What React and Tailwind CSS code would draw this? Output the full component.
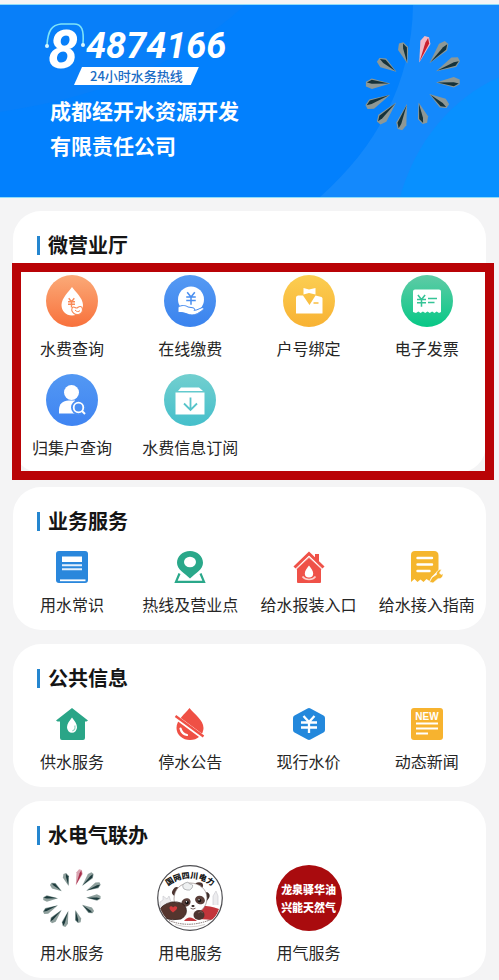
import React from 'react';

// length and direction of every blade of the water company logo
const BLADES = [
  { angle: 17, outer: 147, inner: 69, red: true },
  { angle: 40, outer: 160, inner: 82 },
  { angle: 63, outer: 157, inner: 83 },
  { angle: 89, outer: 142, inner: 74 },
  { angle: 124, outer: 127, inner: 64 },
  { angle: 164, outer: 128, inner: 66 },
  { angle: 196, outer: 147, inner: 70 },
  { angle: 221, outer: 160, inner: 82 },
  { angle: 243, outer: 159, inner: 82 },
  { angle: 269, outer: 143, inner: 73 },
  { angle: 304, outer: 127, inner: 65 },
  { angle: 344, outer: 127, inner: 66 },
];

const BladeLogo = ({ className, light = '#8d9896', dark = '#15323a', redLight = '#f3b9c6', redDark = '#c9202e' }) => (
  <svg viewBox="-164 -164 328 328" className={className} aria-hidden="true">
    {BLADES.map(({ angle, outer, inner, red }) => {
      const wide = outer - 18;
      return (
        <g key={angle} transform={`rotate(${angle})`}>
          <polygon points={`0,${-inner + 4} -16,${-wide} -8,${-outer} 6,${-outer} 16,${-wide}`} fill={red ? redLight : light} />
          <polygon points={`0,${-inner} 0,${-wide} 4,${-outer + 3} 12,${-wide}`} fill={red ? redDark : dark} />
        </g>
      );
    })}
  </svg>
);

const Circle = ({ id, from, to, children }) => (
  <svg viewBox="0 0 52 52" className="size-[52px]" aria-hidden="true">
    <defs>
      <linearGradient id={id} x1="0" y1="0" x2="0" y2="1">
        <stop offset="0" stopColor={from} />
        <stop offset="1" stopColor={to} />
      </linearGradient>
    </defs>
    <circle cx="26" cy="26" r="26" fill={`url(#${id})`} />
    {children}
  </svg>
);

const Yen = ({ x, y, size = 1, color, width = 1.6 }) => (
  <path
    transform={`translate(${x} ${y}) scale(${size})`}
    d="M-4-6 0-1 4-6M0-1V7M-5-1H5M-5 2.6H5"
    fill="none"
    stroke={color}
    strokeWidth={width}
  />
);

const BillIcon = () => (
  <Circle id="bill" from="#fbaa78" to="#f8713c">
    <path d="M26 12c3 4.500 11 11 11 18 0 6-5 10.500-11 10.500S15.500 36 15.500 30C15.500 23 23 16.500 26 12Z" fill="#fff" />
    <Yen x={25.500} y={27.500} size={0.700} color="#f98a58" width={2} />
    <path d="M26.500 32.500c1.500-1.500 2.500.5 4 .5s2-2 4-1.500 2.500 3 1.500 5.500-5.500 3.500-8 1.500-2.500-4.500-1.500-6Z" fill="#fff" stroke="#f98a58" strokeWidth="1.100" />
    <path d="M29 35c1.500 2 4 2 5 .5" fill="none" stroke="#f98a58" strokeWidth="1" />
  </Circle>
);

const PayIcon = () => (
  <Circle id="pay" from="#569af3" to="#3a83ee">
    <circle cx="27" cy="24.500" r="13" fill="#fff" />
    <Yen x={27} y={23} size={0.950} color="#4a8ff0" width={1.600} />
    <path d="M14 32c4-2 7-2 10 0l5 .8c2 .4 2 2 1 2.500 3 .2 5-1.800 8-2.600 2-.4 2.500 1.200 1 2.200-4 2.900-7 5.100-11 5.100-4 0-6-2-10-2.400l-4-.2Z" fill="#fff" stroke="#4389ef" strokeWidth="1" />
  </Circle>
);

const BindIcon = () => (
  <Circle id="bind" from="#fbce52" to="#f8b233">
    <path d="M20.500 13 26 14.500 32.500 13v6.500L26 18l-5.500 1.500Z" fill="#fff" />
    <path d="M15 20.500h5l6.500 9.500 6-9.500 6 1.500q1 .5 1 1.500V38.500H13V22.500q0-1.500 2-2Z" fill="#fff" />
    <path d="M30.500 28h5" stroke="#f9be42" strokeWidth="1.500" />
  </Circle>
);

const InvoiceIcon = () => (
  <Circle id="invoice" from="#5fcba6" to="#07c886">
    <path d="M14 14.500h24q2 0 2 2V37l-2 1-2.300-1.500L33.400 38l-2.300-1.500L28.800 38l-2.300-1.500L24.200 38l-2.300-1.500L19.600 38l-2.300-1.500L15 38l-3-1V16.500q0-2 2-2Z" fill="#fff" />
    <Yen x={20.500} y={25.500} size={0.900} color="#35c496" width={1.700} />
    <path d="M27 23.500h9M27 27.500h6.500" stroke="#35c496" strokeWidth="1.500" />
  </Circle>
);

const AccountIcon = () => (
  <Circle id="account" from="#5398f3" to="#3f84f2">
    <circle cx="25.500" cy="18.500" r="7.500" fill="#fff" />
    <path d="M13 39.500V36c0-6 4-9.500 9.500-9.500h6.500L33 39.500Z" fill="#fff" />
    <circle cx="32.500" cy="33.500" r="5.500" fill="#4a8ff3" stroke="#4a8ff3" strokeWidth="4" />
    <circle cx="32.500" cy="33.500" r="4.800" fill="#4a8ff3" stroke="#fff" strokeWidth="1.800" />
    <path d="m36 37 3 3" stroke="#fff" strokeWidth="2" />
  </Circle>
);

const SubscribeIcon = () => (
  <Circle id="subscribe" from="#72cfcf" to="#45bfcb">
    <path d="M17 13.500h18l4 3.500H14Z" fill="#fff" />
    <path d="M11.500 18.500h29V40.500h-29Z" fill="#fff" />
    <path d="M26.500 23.500v12m-6.500-6 6.500 6.500 6.500-6.500" fill="none" stroke="#57c4ca" strokeWidth="1.800" />
  </Circle>
);

const Small = ({ children }) => (
  <svg viewBox="0 0 32 32" className="size-8" aria-hidden="true">{children}</svg>
);

const BookIcon = () => (
  <Small>
    <rect width="32" height="32" rx="3" fill="#2a87dc" />
    <path d="M6 5.500h20v5.500H6Z" fill="#fff" />
    <path d="M6 14.200h20M6 18.200h20" stroke="#e4f0fb" strokeWidth="2" />
    <path d="M4 29.300h25.500" stroke="#fff" strokeWidth="1.800" />
  </Small>
);

const PinIcon = () => (
  <Small>
    <path d="M16 0c7.500 0 13 5.200 13 11.800C29 18.500 22 22 16 27.500 10 22 3 18.500 3 11.800 3 5.200 8.500 0 16 0Z" fill="#2aa88a" />
    <ellipse cx="16" cy="11" rx="6" ry="5.300" fill="#fff" />
    <path d="M5.500 22.500 2 30.800h28l-3.500-8.300" fill="none" stroke="#2aa88a" strokeWidth="2.200" />
  </Small>
);

const HouseDropIcon = () => (
  <Small>
    <path d="M22 3h4v9l-4-4Z" fill="#ef5148" />
    <path d="m1.500 16.500 14.500-14 14.500 14" fill="none" stroke="#ef5148" strokeWidth="3" />
    <path d="M4 17.500 16 6.500l12 11V31q0 1-1 1H5q-1 0-1-1Z" fill="#ef5148" />
    <path d="m3 18.500 13-12 13 12" fill="none" stroke="#f9b8b3" strokeWidth=".8" />
    <path d="M16 14.500c2 2.800 4.200 5 4.200 8a4.200 4 0 0 1-8.400 0c0-3 2.200-5.200 4.200-8Z" fill="#fff" />
    <path d="M9.500 25.500c3 4 10 4 13 0" fill="none" stroke="#fbd0cb" strokeWidth="1.600" />
  </Small>
);

const GuideIcon = () => (
  <Small>
    <path d="M4 0h19q4.500 0 4.500 4.500V19l-7 7-2 4-3-2-3 3-3-2.500L6.500 31 3.500 28 0 31V4Q0 0 4 0Z" fill="#f5b62e" />
    <path d="M6.500 7h14.500M6.500 13.500h14.500M6.500 20h12" stroke="#fff" strokeWidth="2.400" strokeLinecap="round" />
    <path d="M18.500 31 21 26.500l4.500-3c-.5-3 2.500-5.500 5-5l-2 3.500 1.500 1.500 2-.8c.2 3.300-2 5.500-5 5l-5 4.300Z" fill="#f5b62e" stroke="#fff" strokeWidth=".6" />
  </Small>
);

const SupplyIcon = () => (
  <Small>
    <path d="M16 0 32 12.500l-1.500 1H29V30q0 2-2 2H6q-2 0-2-2V13.500H1.500L0 12.500Z" fill="#2aa587" />
    <path d="M16 9.500c2.500 3.500 5 6 5 9.800a5 5.500 0 0 1-10 0c0-3.800 2.500-6.300 5-9.800Z" fill="#fff" />
    <path d="M18.800 17.500c.8 3-.3 4.800-2.500 5.500" fill="none" stroke="#8fd1c0" strokeWidth="1.200" />
  </Small>
);

const OutageIcon = () => (
  <Small>
    <path d="M15.500 0C20 6 29.500 12 29.500 20a13.500 12 0 0 1-27 0C2.500 12 11 6 15.500 0Z" fill="#ef5045" />
    <path d="m1 8.500 28.500 21" stroke="#fff" strokeWidth="4.600" />
    <path d="m1.500 8 28 20.500" stroke="#ef5045" strokeWidth="2.400" />
    <path d="M6.500 20.500c.8 3.500 3 5.800 6.500 6.500" fill="none" stroke="#fff" strokeWidth="2.200" strokeLinecap="round" />
  </Small>
);

const PriceIcon = () => (
  <Small>
    <path d="M14.500.5q1.500-.8 3 0L30.500 7.500Q32 8.300 32 10v12q0 1.700-1.500 2.500l-13 7q-1.500.8-3 0l-13-7Q0 23.700 0 22V10q0-1.700 1.500-2.500Z" fill="#2388dc" />
    <path d="m10.500 8 5.500 6 5.500-6M8 14.500h16M8 19.500h16M16 14v11" fill="none" stroke="#fff" strokeWidth="2.300" />
  </Small>
);

const NewsIcon = () => (
  <Small>
    <rect width="32" height="32" rx="3" fill="#f7b32f" />
    <text x="16" y="11.500" textAnchor="middle" fontSize="10" fontWeight="700" fill="#fff" fontFamily="Liberation Sans, sans-serif">NEW</text>
    <path d="M5 15.500h22M5 20.500h22M5 25.500h12" stroke="#fff" strokeWidth="2" />
  </Small>
);

const PandaLogo = () => (
  <svg viewBox="0 0 66 66" className="size-[66px]" aria-hidden="true">
    <defs>
      <path id="panda-arc" d="M9 22.500Q33 4 57 22.500" />
      <clipPath id="panda-clip"><circle cx="33" cy="33" r="31.500" /></clipPath>
    </defs>
    <circle cx="33" cy="33" r="32.300" fill="#fff" stroke="#4c4c50" strokeWidth="1.200" />
    <g clipPath="url(#panda-clip)">
      <path d="M3 42v-5l3-2v-4l4 3 2-3 2 6M56 40v-9l3-5 2 5v9" fill="#ececee" stroke="#c8c8cc" strokeWidth=".6" />
      <path d="M42 41q8-1 20 3-3 9-8 11-10-2-26 1l1-8Z" fill="#c2353b" />
      <ellipse cx="19" cy="26.500" rx="3.500" ry="4.500" transform="rotate(35 19 26.500)" fill="#4d3530" />
      <ellipse cx="42" cy="20.500" rx="4" ry="3.200" fill="#4d3530" />
      <path d="M46 34q-1-5 4-7 4 2 2 6l-3 4Z" fill="#3d2d2a" />
      <path d="M17 34c0-10 7-16 16-16s17 6 17 15-7 16-16 16-17-6-17-15Z" fill="#fff" stroke="#857673" strokeWidth=".6" />
      <ellipse cx="29" cy="37.500" rx="4.800" ry="4" transform="rotate(-30 29 37.500)" fill="#5a3f3a" />
      <ellipse cx="43" cy="35" rx="5" ry="4.200" transform="rotate(20 43 35)" fill="#5a3f3a" />
      <circle cx="30" cy="37.500" r="1.700" fill="#0f0c0c" />
      <circle cx="42.500" cy="35.500" r="1.700" fill="#0f0c0c" />
      <circle cx="29.500" cy="36.800" r=".7" fill="#fff" />
      <circle cx="42" cy="34.800" r=".7" fill="#fff" />
      <ellipse cx="36" cy="41" rx="1.600" ry="1.100" fill="#2a1e1c" />
      <path d="M33.500 43.200q2.500 1.800 5 0" fill="none" stroke="#5a413d" strokeWidth=".8" />
      <path d="M27 24q-3-4 1-6 3-2 5 1 4 0 2 4-2 3-5 2Z" fill="#eef0f1" stroke="#9b9ea1" strokeWidth=".7" />
      <path d="M25 46h20v9H27Z" fill="#fbf9f8" />
      <path d="M1 47q4-8 14-10 11-1 14 6 2 7-5 11-8 2-18-1Z" fill="#54352e" stroke="#332220" strokeWidth=".8" />
      <ellipse cx="42" cy="50" rx="5.500" ry="5" fill="#4d342f" />
      <path d="M41 48q3-3 5 0" fill="none" stroke="#83615b" strokeWidth=".8" />
      <path d="M16 47.500q-5-4-3-6 2-1 3 1 2-2 4-.5 1 2-4 5.500Z" fill="#d33a3c" />
      <path d="M27 56q5-7 13 0Z" fill="#c2353b" />
    </g>
    <text fontSize="8" fontWeight="900" fill="#161616" textAnchor="middle" fontFamily="Noto Sans CJK SC, sans-serif">
      <textPath href="#panda-arc" startOffset="50%">国网四川电力</textPath>
    </text>
    <path d="M12 55.500q20 8 42-1" fill="none" stroke="#70605e" strokeWidth=".9" strokeDasharray="1.500 .8" />
    <path d="M18 59.500q15 4.500 30 0" fill="none" stroke="#b9b0af" strokeWidth=".6" />
  </svg>
);

const GasLogo = () => (
  <span className="flex size-[66px] flex-col items-center justify-center rounded-full bg-[#a90b0e] text-[11px] leading-[18px] font-black whitespace-nowrap text-white">
    <span>龙泉驿华油</span>
    <span>兴能天然气</span>
  </span>
);

const HALL = [
  { label: '水费查询', icon: <BillIcon /> },
  { label: '在线缴费', icon: <PayIcon /> },
  { label: '户号绑定', icon: <BindIcon /> },
  { label: '电子发票', icon: <InvoiceIcon /> },
  { label: '归集户查询', icon: <AccountIcon /> },
  { label: '水费信息订阅', icon: <SubscribeIcon /> },
];

const BUSINESS = [
  { label: '用水常识', icon: <BookIcon /> },
  { label: '热线及营业点', icon: <PinIcon /> },
  { label: '给水报装入口', icon: <HouseDropIcon /> },
  { label: '给水接入指南', icon: <GuideIcon /> },
];

const PUBLIC_INFO = [
  { label: '供水服务', icon: <SupplyIcon /> },
  { label: '停水公告', icon: <OutageIcon /> },
  { label: '现行水价', icon: <PriceIcon /> },
  { label: '动态新闻', icon: <NewsIcon /> },
];

const PARTNERS = [
  { label: '用水服务', icon: <BladeLogo className="size-[66px]" light="#8fa09d" dark="#1c3a3c" redLight="#d9a3b0" redDark="#a92f4b" /> },
  { label: '用电服务', icon: <PandaLogo /> },
  { label: '用气服务', icon: <GasLogo /> },
];

const Section = ({ title, items, highlighted }) => (
  <section className="relative rounded-[28px] bg-white pt-6 pb-4">
    <h2 className="ml-6 flex items-center gap-2 text-[20px] leading-5 font-bold text-[#151515]">
      <span className="h-[19px] w-[3px] bg-[#2586cf]" />
      {title}
    </h2>
    <div className="mt-5 grid grid-cols-4 gap-y-4">
      {items.map((item) => (
        <a key={item.label} href="#" className="flex flex-col items-center gap-[11px] text-[16px] leading-5 whitespace-nowrap text-[#262626]">
          {item.icon}
          {item.label}
        </a>
      ))}
    </div>
    {highlighted && <div className="pointer-events-none absolute top-[52px] -right-2 -bottom-[7px] -left-px border-[9px] border-[#b90306]" />}
  </section>
);

const Banner = () => (
  <header className="relative flex items-start justify-between overflow-hidden border-y border-[#8fdcf8] bg-[#0280fd] pt-6 pr-8 pb-[34px] pl-12 text-white">
    <svg viewBox="0 0 499 194" preserveAspectRatio="none" className="absolute inset-0 size-full" aria-hidden="true">
      <path d="M0 0H245C190 50 120 90 0 108Z" fill="#087ff9" />
      <path d="M413 0C412 80 375 145 320 194H499V0Z" fill="#1489fc" />
      <path d="M499 73C450 95 415 140 400 194H499Z" fill="#0890ff" />
    </svg>
    <div className="relative">
      <svg viewBox="0 0 44 28" className="absolute -top-2 -left-1 h-7 w-11" aria-hidden="true">
        <path d="M3 24C4 9 8 4 17 3h13c8 0 10 6 9 20" fill="none" stroke="#7fe3f7" strokeWidth="1.600" />
        <circle cx="3" cy="25" r="2" fill="#d9f7fd" />
        <circle cx="39" cy="24" r="2" fill="#d9f7fd" />
      </svg>
      <p className="flex h-[38px] items-start gap-2 font-[Roboto,sans-serif] font-bold italic">
        <span className="text-[54px] leading-[42px]">8</span>
        <span className="text-[36px] leading-[34px]">4874166</span>
      </p>
      <p className="relative ml-[26px] w-fit bg-white px-4 text-[13px] leading-[18px] font-medium text-[#1a6cc4] [clip-path:polygon(8px_0,100%_0,calc(100%-8px)_100%,0_100%)]">
        24小时水务热线
      </p>
      <h1 className="mt-2 ml-[2px] text-[21px] leading-[35px] font-bold">
        成都经开水资源开发
        <br />
        有限责任公司
      </h1>
    </div>
    <BladeLogo className="relative size-[108px]" />
  </header>
);

export default function App() {
  return (
    <div className="min-h-screen bg-[#f4f4f5] pt-1 font-['Noto_Sans_CJK_SC',sans-serif]">
      <Banner />
      <main className="mx-[13px] mt-[13px] flex flex-col gap-[14px]">
        <Section title="微营业厅" items={HALL} highlighted />
        <Section title="业务服务" items={BUSINESS} />
        <Section title="公共信息" items={PUBLIC_INFO} />
        <Section title="水电气联办" items={PARTNERS} />
      </main>
    </div>
  );
}
